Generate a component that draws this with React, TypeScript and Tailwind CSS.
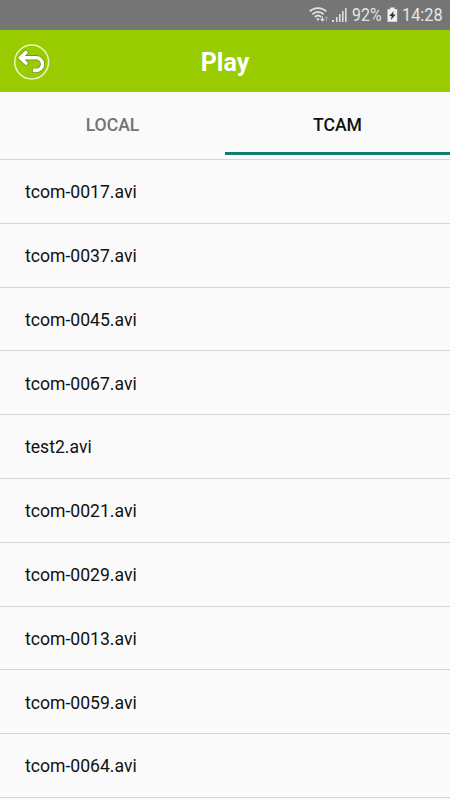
import clsx from 'clsx';

const files = [
  'tcom-0017.avi',
  'tcom-0037.avi',
  'tcom-0045.avi',
  'tcom-0067.avi',
  'test2.avi',
  'tcom-0021.avi',
  'tcom-0029.avi',
  'tcom-0013.avi',
  'tcom-0059.avi',
  'tcom-0064.avi',
];

interface TabProps {
  label: string;
  active?: boolean;
}

function WifiIcon() {
  return (
    <svg width="20" height="18" viewBox="0 0 20 18" fill="none" stroke="#e2e2e2" strokeWidth="1.8">
      <path d="M.8 5.4C5.2.9 12.8.9 17.2 5.4" />
      <path d="M3.4 8.3c3.2-3.2 8-3.2 11.2 0" />
      <path d="M5.9 11c1.9-1.8 4.3-1.8 6.2 0" />
      <path d="M7.2 12.8Q9 11.5 10.6 12.8L9 15z" fill="#e2e2e2" stroke="none" />
      <path d="M13.4 10.5v4M11.8 13.2l1.6 1.6 1.6-1.6" strokeWidth="1.2" />
      <path d="M17.4 15v-4M15.9 12.3l1.5-1.5 1.5 1.5" stroke="#aaa" strokeWidth="1" />
    </svg>
  );
}

function SignalIcon() {
  return (
    <svg width="16" height="18" viewBox="0 0 16 18" fill="#dedede">
      <path d="M0 14h2v2H0zM4 11h1.6v5H4zM7 8h1.6v8H7zM10 5h1.6v11H10zM13 2h1.6v14H13z" />
    </svg>
  );
}

function BatteryIcon() {
  return (
    <svg width="11" height="16" viewBox="0 0 11 16">
      <path d="M3.2.5h4.4v1.7h2.6v12.6H.5V2.2h2.7z" fill="#f0f0f0" />
      <path d="M6.8 3.9 2.2 9h2.5l-.9 4L8.7 7.6H6z" fill="#333" />
    </svg>
  );
}

function BackIcon() {
  return (
    <svg width="36" height="36" viewBox="0 0 36 36" fill="none">
      <circle cx="17.7" cy="18" r="16.9" stroke="#ebf7c8" strokeWidth="1.5" />
      <g stroke="#648606" strokeWidth="4.9">
        <path d="M13.4 7 6.4 13.8l7 6.8M7 13.8h15.4a6.2 6.3 0 0 1 0 12.6H18.2" />
      </g>
      <g stroke="#fff" strokeWidth="3.6">
        <path d="M13 7.4 6.4 13.8l6.6 6.4M7 13.8h15.4a6.2 6.3 0 0 1 0 12.6H18.8" />
      </g>
    </svg>
  );
}

function Tab({ label, active = false }: TabProps) {
  return (
    <div
      className={clsx(
        'flex flex-1 items-center justify-center border-b-[3px] pt-[6px] text-[17.6px] font-medium',
        active ? 'border-[#0f7f6e] text-[#111]' : 'border-transparent text-[#737373]',
      )}
    >
      {label}
    </div>
  );
}

export default function App() {
  return (
    <div className="flex h-[800px] w-[450px] flex-col overflow-hidden bg-[#fafafa] font-['Roboto',sans-serif]">
      {/* Status bar */}
      <div className="flex h-[30px] shrink-0 items-center bg-[#757575] pl-[309px] text-[19px] text-[#e6e6e6]">
        <WifiIcon />
        <div className="ml-[3px]">
          <SignalIcon />
        </div>
        <span className="ml-[4px] w-[30px] origin-left scale-x-[0.84]">92%</span>
        <div className="ml-[5px]">
          <BatteryIcon />
        </div>
        <span className="ml-[4px] origin-left scale-x-[0.86]">14:28</span>
      </div>

      {/* Header */}
      <header className="grid h-[62px] shrink-0 grid-cols-[50px_1fr_50px] items-center bg-[#99cc00]">
        <div className="pt-[2px] pl-[14px]">
          <BackIcon />
        </div>
        <h1 className="pt-[3px] text-center text-[25px] font-bold text-white">Play</h1>
      </header>

      {/* Tabs */}
      <div className="flex h-[63px] shrink-0">
        <Tab label="LOCAL" />
        <Tab label="TCAM" active />
      </div>

      {/* Recordings */}
      <ul className="mt-[4px] shrink-0 border-t border-[#d6d6d6]">
        {files.map((file) => (
          <li
            key={file}
            className="flex h-[63.8px] items-center border-b border-[#d6d6d6] pt-[2px] pl-[25px] text-[17.6px] text-[#111]"
          >
            {file}
          </li>
        ))}
      </ul>
    </div>
  );
}
